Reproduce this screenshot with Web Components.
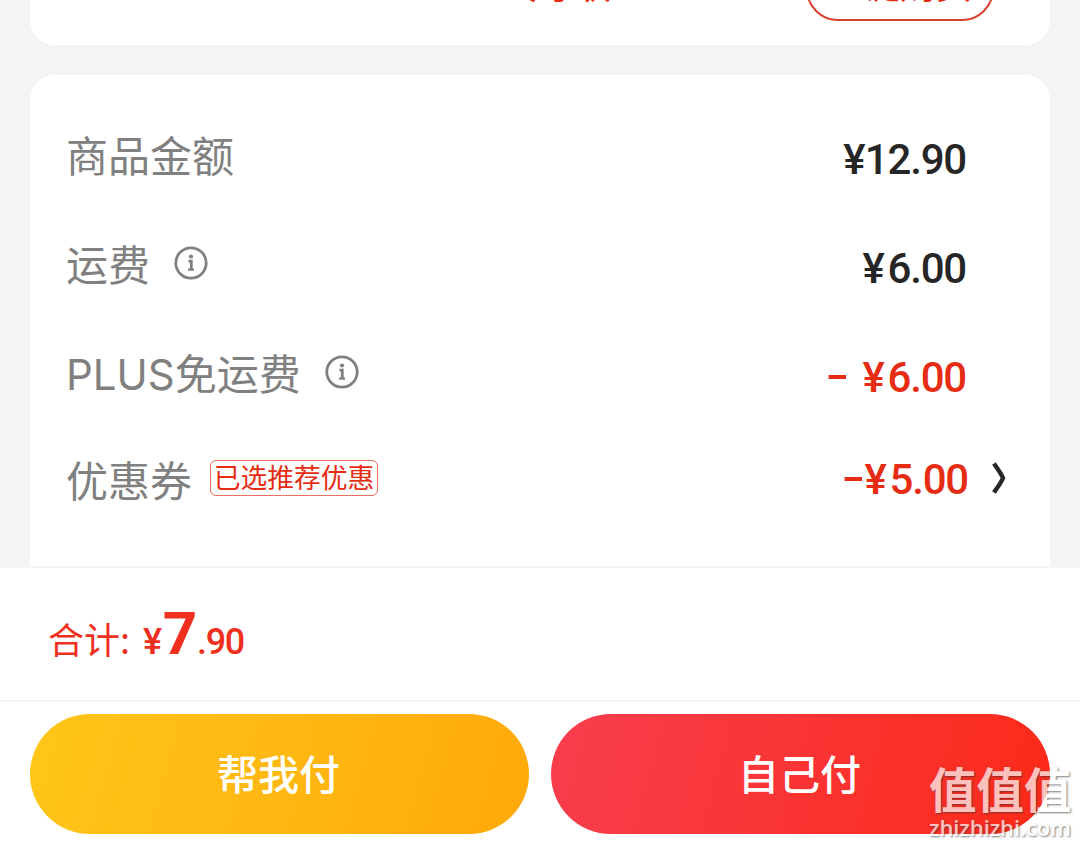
<!DOCTYPE html>
<html lang="zh-CN">
<head>
<meta charset="utf-8">
<title>结算</title>
<style>
  body {
    margin: 0;
    background: #f4f4f4;
    font-family: "Noto Sans CJK SC", sans-serif;
  }
</style>
</head>
<body>
<checkout-page></checkout-page>

<script>
// amount text, DIN-like digits
class PriceText extends HTMLElement {
  connectedCallback() {
    const value = this.getAttribute('value')
    const minus = value.startsWith('-')
    const [yen, ...digits] = value.replace(/^-\s*/, '')
    this.attachShadow({ mode: 'open' }).innerHTML = `
      <style>
        :host {
          display: flex;
          font: 500 42px/50px Roboto, sans-serif;
          letter-spacing: -1.2px;
          white-space: nowrap;
        }
        .minus {
          width: 18px;
          margin-right: var(--minus-gap, 19px);
          transform: translateY(-2px) scaleX(1.6);
          transform-origin: 0 0;
        }
        .yen { width: 25px; }
        /* a leading 1 sits closer to the currency sign */
        .tight { margin-left: -3.5px; }
      </style>
      ${minus ? '<span class="minus">-</span>' : ''}<span class="yen">${yen}</span><span class="${digits[0] === '1' ? 'tight' : ''}">${digits.join('')}</span>
    `
  }
}

class InfoIcon extends HTMLElement {
  connectedCallback() {
    this.attachShadow({ mode: 'open' }).innerHTML = `
      <style>
        :host { display: block; width: 34px; height: 34px; }
        svg { display: block; }
      </style>
      <svg width="34" height="34" viewBox="0 0 34 34" fill="none" stroke="#808080">
        <circle cx="17" cy="17" r="15.2" stroke-width="2.8"/>
        <circle cx="17" cy="10.5" r="2.1" fill="#808080" stroke="none"/>
        <path d="M14.5 15.2h2.8v8" stroke-width="2.8"/>
        <path d="M14 23.6h6" stroke-width="2.2"/>
      </svg>
    `
  }
}

class CouponTag extends HTMLElement {
  connectedCallback() {
    this.attachShadow({ mode: 'open' }).innerHTML = `
      <style>
        :host {
          display: block;
          box-sizing: border-box;
          width: 168px;
          height: 36px;
          border: 1px solid #e8705f;
          border-radius: 6px;
          color: #e62d14;
          font-size: 26.8px;
          line-height: 31px;
          text-align: center;
          white-space: nowrap;
        }
      </style>
      <slot></slot>
    `
  }
}

class AmountRow extends HTMLElement {
  connectedCallback() {
    const link = this.hasAttribute('link')
    this.attachShadow({ mode: 'open' }).innerHTML = `
      <style>
        :host {
          display: flex;
          align-items: flex-start;
          height: 109px;
          color: #262626;
        }
        :host([discount]) { color: #e62d14; }
        .label {
          padding-top: 4px;
          color: #808080;
          font-family: Inter, "Noto Sans CJK SC", sans-serif;
          font-size: 42px;
          line-height: 60px;
          white-space: nowrap;
        }
        ::slotted(info-icon) { margin: 14px 0 0 24px; }
        ::slotted(coupon-tag) { margin: 12px 0 0 18px; }
        price-text { margin: 12px 0 0 auto; }
        :host([link]) price-text { --minus-gap: 5px; margin-top: 7px; margin-right: -1px; }
        .chevron { flex: none; width: 14px; height: 32px; margin: 14px -40px 0 25px; }
      </style>
      <span class="label">${this.getAttribute('label')}</span>
      <slot></slot>
      <price-text value="${this.getAttribute('amount')}"></price-text>
      ${link ? `<svg class="chevron" viewBox="0 0 14 32" fill="none" stroke="#262626" stroke-width="4.4">
        <path d="M2 1.5C5 6 9 11 11 16C9 21 5 26 2 30.5"/></svg>` : ''}
    `
  }
}

class WhiteCard extends HTMLElement {
  connectedCallback() {
    this.attachShadow({ mode: 'open' }).innerHTML = `
      <style>
        :host {
          display: block;
          box-sizing: border-box;
          margin: 0 30px;
          background: #fff;
        }
      </style>
      <slot></slot>
    `
  }
}

// tail of the PLUS promo card, scrolled mostly out of view
class PlusPromo extends HTMLElement {
  connectedCallback() {
    this.attachShadow({ mode: 'open' }).innerHTML = `
      <style>
        :host {
          display: flex;
          justify-content: flex-end;
          align-items: flex-end;
          height: 45px;
          box-sizing: border-box;
          padding: 0 56px 24px 0;
          color: #e62d14;
        }
        .name { margin: 0 190px 13px 0; font-size: 36px; line-height: 50px; font-weight: 500; }
        .buy {
          box-sizing: border-box;
          width: 188px;
          height: 64px;
          border: 2px solid #d8402f;
          border-radius: 32px;
          font-size: 36px;
          line-height: 48px;
          text-align: center;
        }
      </style>
      <span class="name">专享价</span>
      <span class="buy">一键购买</span>
    `
  }
}

class TotalBar extends HTMLElement {
  connectedCallback() {
    this.attachShadow({ mode: 'open' }).innerHTML = `
      <style>
        :host {
          display: flex;
          align-items: baseline;
          box-sizing: border-box;
          height: 134px;
          padding: 28px 48px 0;
          border-bottom: 2px solid #f5f5f5;
          color: #f0301f;
          font-size: 36px;
          line-height: 76px;
        }
        .label { width: 95px; white-space: nowrap; }
        .num { font-family: Roboto, sans-serif; font-weight: 500; letter-spacing: -1.3px; }
        .big { margin: 0 1px 0 2px; font-size: 60px; font-weight: 700; }
      </style>
      <span class="label">合计:</span>
      <span class="num">¥</span><span class="num big">7</span><span class="num">.90</span>
    `
  }
}

class PayButton extends HTMLElement {
  connectedCallback() {
    this.attachShadow({ mode: 'open' }).innerHTML = `
      <style>
        :host { display: block; }
        button {
          display: block;
          width: 100%;
          height: 120px;
          margin: 0;
          padding: 0 2px 4px 0;
          border: 0;
          border-radius: 60px;
          background: var(--fill);
          color: #fff;
          font: 500 41px/60px "Noto Sans CJK SC", sans-serif;
        }
      </style>
      <button type="button"><slot></slot></button>
    `
  }
}

class SiteMark extends HTMLElement {
  connectedCallback() {
    this.attachShadow({ mode: 'open' }).innerHTML = `
      <style>
        :host {
          position: absolute;
          left: 929px;
          top: 764px;
          color: #fff;
          opacity: 0.7;
          text-shadow: 1px 1px 2px rgba(50, 50, 50, 0.9);
          white-space: nowrap;
        }
        div { font-size: 47.5px; line-height: 48px; font-weight: 700; }
        p { margin: 4px 0 0; font: 600 22px/22px "Open Sans", sans-serif; letter-spacing: -0.1px; }
      </style>
      <div>值值值</div>
      <p>zhizhizhi.com</p>
    `
  }
}

class CheckoutPage extends HTMLElement {
  connectedCallback() {
    this.attachShadow({ mode: 'open' }).innerHTML = `
      <style>
        :host {
          display: flex;
          flex-direction: column;
          position: relative;
          width: 1080px;
          height: 846px;
          overflow: hidden;
        }
        .promo { border-radius: 0 0 24px 24px; }
        .bill {
          flex: none;
          height: 491px;
          margin-top: 30px;
          padding: 48px 84px 0 36px;
          border-radius: 24px 24px 0 0;
        }
        .bill amount-row:nth-child(3) { height: 107px; }
        .panel {
          height: 280px;
          background: #fff;
          border-top: 2px solid #f5f5f5;
        }
        .actions {
          display: grid;
          grid-template-columns: 1fr 1fr;
          gap: 22px;
          padding: 12px 30px;
        }
        .friend { --fill: linear-gradient(105deg, #ffc619, #ffa90a); }
        .self { --fill: linear-gradient(105deg, #f73e4e, #fc2a18); }
      </style>
      <white-card class="promo"><plus-promo></plus-promo></white-card>
      <white-card class="bill">
        <amount-row label="商品金额" amount="¥12.90"></amount-row>
        <amount-row label="运费" amount="¥6.00"><info-icon></info-icon></amount-row>
        <amount-row label="PLUS免运费" amount="- ¥6.00" discount><info-icon></info-icon></amount-row>
        <amount-row label="优惠券" amount="-¥5.00" discount link><coupon-tag>已选推荐优惠</coupon-tag></amount-row>
      </white-card>
      <div class="panel">
        <total-bar></total-bar>
        <div class="actions">
          <pay-button class="friend">帮我付</pay-button>
          <pay-button class="self">自己付</pay-button>
        </div>
      </div>
      <site-mark></site-mark>
    `
  }
}

customElements.define('price-text', PriceText)
customElements.define('info-icon', InfoIcon)
customElements.define('coupon-tag', CouponTag)
customElements.define('amount-row', AmountRow)
customElements.define('white-card', WhiteCard)
customElements.define('plus-promo', PlusPromo)
customElements.define('total-bar', TotalBar)
customElements.define('pay-button', PayButton)
customElements.define('site-mark', SiteMark)
customElements.define('checkout-page', CheckoutPage)
</script>
</body>
</html>
